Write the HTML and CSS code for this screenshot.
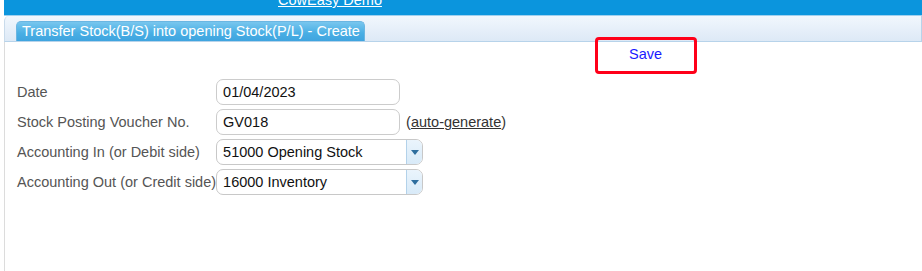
FILE: index.html
```html
<!DOCTYPE html>
<html>
<head>
<meta charset="utf-8">
<link rel="stylesheet" href="styles.css">
</head>
<body>
<div class="page">
  <div class="topbar"><a class="brand" href="#">CowEasy Demo</a></div>
  <div class="tabbar">
    <div class="tab">Transfer Stock(B/S) into opening Stock(P/L) - Create</div>
  </div>
  <div class="panel">
    <div class="actions">
      <a class="save" href="#">Save</a>
      <span class="highlight"></span>
    </div>
    <div class="form">
      <label class="lbl">Date</label>
      <div class="field"><span class="input">01/04/2023</span></div>
      <label class="lbl">Stock Posting Voucher No.</label>
      <div class="field"><span class="input">GV018</span><span class="gen">(<a href="#">auto-generate</a>)</span></div>
      <label class="lbl">Accounting In (or Debit side)</label>
      <div class="field"><span class="select"><span class="val">51000 Opening Stock</span><span class="arrow"><svg width="8" height="5" viewBox="0 0 8 5"><path d="M0 0h8L4 5z" fill="#2e6e9e"/></svg></span></span></div>
      <label class="lbl">Accounting Out (or Credit side)</label>
      <div class="field"><span class="select"><span class="val">16000 Inventory</span><span class="arrow"><svg width="8" height="5" viewBox="0 0 8 5"><path d="M0 0h8L4 5z" fill="#2e6e9e"/></svg></span></span></div>
    </div>
  </div>
</div>
</body>
</html>
```
FILE: styles.css
```css
html, body { margin: 0; padding: 0; background: #fff; }
body { font-family: "Liberation Sans", Arial, sans-serif; font-size: 14.5px; }
.page { padding-left: 4px; height: 271px; overflow: hidden; }
.topbar {
  height: 15px; background: #0b95dd; overflow: hidden;
  border-bottom: 1px solid #9fd0ef;
}
.brand {
  display: block; width: max-content; margin-left: 274px; margin-top: -9px;
  color: #fff; font-size: 14.5px; line-height: 19px; text-decoration: underline;
}
.tabbar {
  height: 25px; border: 1px solid #b7d3ea; border-top: none;
  border-left-color: #c9dbeb;
  border-top-left-radius: 5px;
  background: linear-gradient(#f1f7fd, #dde9f6);
  display: flex; align-items: flex-end; padding-left: 11px;
}
.tab {
  height: 19px; line-height: 19px; padding: 0 4px 0 5px;
  color: #fff; font-size: 14.5px;
  background: linear-gradient(#78c6ee, #48aee4 60%, #3fa4df);
  border: 1px solid #6ab6e2; border-bottom: none;
  border-radius: 5px 5px 0 0;
}
.panel { border-left: 1px solid #dcdcdc; height: 240px; }
.actions { position: relative; height: 35px; }
.save {
  position: absolute; left: 624px; top: 4px;
  color: #1a1aff; text-decoration: none; font-size: 14.5px;
}
.highlight {
  position: absolute; left: 590px; top: -5px; width: 96px; height: 31px;
  border: 3px solid #ff0019; border-radius: 4px;
}
.form {
  display: grid; grid-template-columns: auto auto; justify-content: start;
  row-gap: 4px; padding-left: 12px; margin-top: 2px;
}
.lbl { color: #555; line-height: 25px; align-self: center; }
.field { display: flex; align-items: center; gap: 6px; height: 26px; }
.input {
  box-sizing: border-box; width: 184px; height: 26px; line-height: 24px;
  border: 1px solid #ccc; border-radius: 7px; padding-left: 6px; color: #111;
}
.gen { color: #333; }
.gen a { color: #333; text-decoration: underline; }
.select {
  box-sizing: border-box; width: 207px; height: 26px; display: flex;
  border: 1px solid #c8c8c8; border-radius: 7px; overflow: hidden;
}
.val { flex: 1; line-height: 24px; padding-left: 6px; color: #111; }
.arrow {
  width: 15px; border-left: 1px solid #b3d2ea;
  background: linear-gradient(#eaf4fc, #d8eaf8);
  display: flex; align-items: center; justify-content: center;
}
```
